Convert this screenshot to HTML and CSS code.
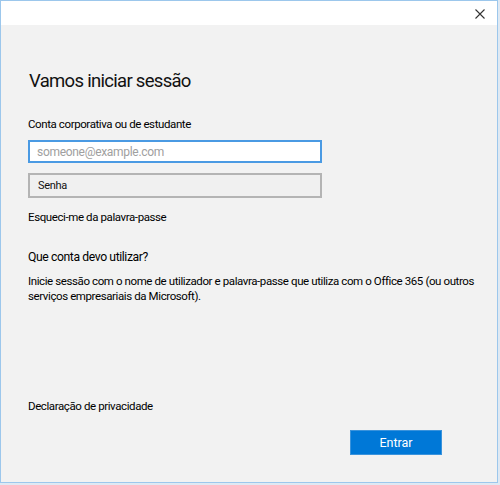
FILE: index.html
```html
<!DOCTYPE html>
<html lang="pt">
<head>
<meta charset="utf-8">
<title>Vamos iniciar sessão</title>
<link rel="stylesheet" href="styles.css">
</head>
<body>
<div class="window">
  <div class="titlebar">
    <button class="close" aria-label="Fechar">
      <svg width="10" height="10" viewBox="0 0 10 10"><path d="M0.5 0.5 L9.5 9.5 M9.5 0.5 L0.5 9.5" stroke="#333" stroke-width="1.1" fill="none"/></svg>
    </button>
  </div>
  <div class="content">
    <h1 class="heading">Vamos iniciar sessão</h1>
    <div class="label">Conta corporativa ou de estudante</div>
    <div class="input input-email">someone@example.com</div>
    <div class="input input-pass">Senha</div>
    <div class="link forgot">Esqueci-me da palavra-passe</div>
    <div class="question">Que conta devo utilizar?</div>
    <p class="para">Inicie sessão com o nome de utilizador e palavra-passe que utiliza com o Office 365 (ou outros serviços empresariais da Microsoft).</p>
    <div class="link privacy">Declaração de privacidade</div>
    <div class="actions">
      <button class="btn">Entrar</button>
    </div>
  </div>
</div>
</body>
</html>
```
FILE: styles.css
```css
html, body {
  margin: 0;
  padding: 0;
}
body {
  background: #dfe9f3;
  width: 500px;
  height: 485px;
  font-family: Roboto, "Liberation Sans", Arial, sans-serif;
  color: #000;
  letter-spacing: -0.4px;
}
.window {
  width: 496px;
  height: 481px;
  border: 1px solid #9cc7ec;
  background: #f2f2f2;
  display: flex;
  flex-direction: column;
}
.titlebar {
  height: 24px;
  background: #fff;
  display: flex;
  justify-content: flex-end;
  align-items: center;
}
.close {
  border: 0;
  background: transparent;
  padding: 0;
  width: 10px;
  height: 10px;
  margin-right: 12px;
  margin-top: 2px;
  display: flex;
}
.content {
  flex: 1;
  display: flex;
  flex-direction: column;
  padding-left: 27px;
}
.heading {
  margin: 44px 0 0 1px;
  font-size: 18.5px;
  line-height: 24px;
  font-weight: normal;
  color: #111;
  letter-spacing: -0.7px;
}
.label {
  margin-top: 23px;
  font-size: 11.5px;
  line-height: 16px;
}
.input {
  box-sizing: border-box;
  width: 294px;
  font-size: 12px;
  letter-spacing: -0.3px;
  display: flex;
  align-items: center;
}
.input-email {
  margin-top: 8px;
  height: 23px;
  border: 2px solid #4a9ae3;
  background: #fff;
  color: #a0a0a0;
  padding-left: 7px;
}
.input-pass {
  margin-top: 10px;
  height: 25px;
  border: 2px solid #b4b4b4;
  background: #f0f0f0;
  color: #111;
  padding-left: 8px;
  font-size: 11px;
}
.link {
  font-size: 11.5px;
  line-height: 16px;
}
.forgot {
  margin-top: 11px;
}
.question {
  margin-top: 23px;
  font-size: 12.2px;
  line-height: 18px;
}
.para {
  margin: 8px 0 0 0;
  font-size: 11.5px;
  line-height: 15px;
  width: 452px;
}
.privacy {
  margin-top: 94px;
}
.actions {
  display: flex;
  justify-content: flex-end;
  margin-top: 16px;
  padding-right: 55px;
}
.btn {
  width: 92px;
  height: 25px;
  background: #0078d7;
  border: 1px solid #3a93dc;
  color: #fff;
  font-family: inherit;
  font-size: 12.5px;
  letter-spacing: 0;
  padding: 0;
}
```
